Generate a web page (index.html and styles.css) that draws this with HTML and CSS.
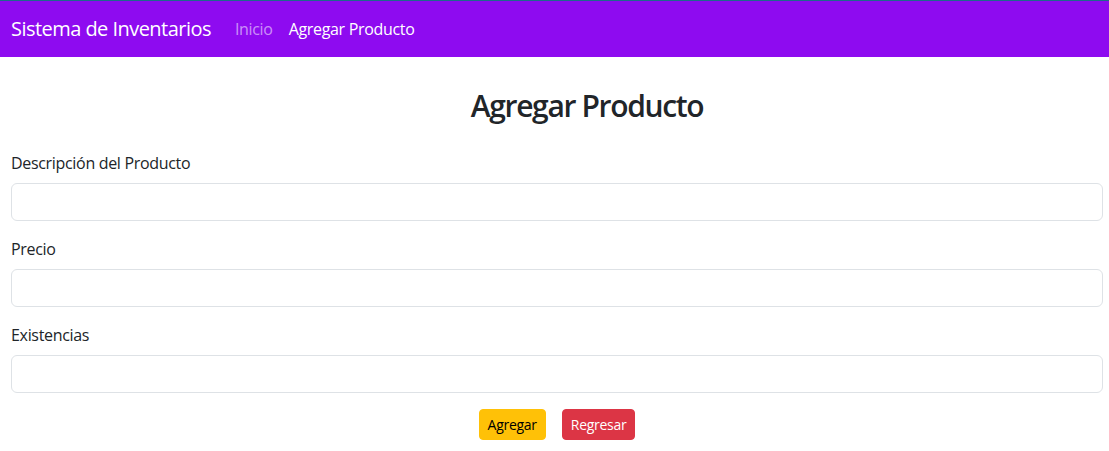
FILE: index.html
```html
<!DOCTYPE html>
<html lang="es">
<head>
<meta charset="utf-8">
<title>Agregar Producto</title>
<link rel="stylesheet" href="styles.css">
</head>
<body>
<nav class="navbar">
  <a class="brand" href="#">Sistema de Inventarios</a>
  <ul class="nav">
    <li><a class="nav-link muted" href="#">Inicio</a></li>
    <li><a class="nav-link active" href="#">Agregar Producto</a></li>
  </ul>
</nav>
<main class="content">
  <h2 class="title">Agregar Producto</h2>
  <form class="form">
    <div class="field">
      <label class="label" for="desc">Descripción del Producto</label>
      <input class="input" id="desc" type="text">
    </div>
    <div class="field">
      <label class="label" for="precio">Precio</label>
      <input class="input" id="precio" type="text">
    </div>
    <div class="field">
      <label class="label" for="exist">Existencias</label>
      <input class="input" id="exist" type="text">
    </div>
    <div class="actions">
      <button class="btn btn-warning" type="button">Agregar</button>
      <button class="btn btn-danger" type="button">Regresar</button>
    </div>
  </form>
</main>
</body>
</html>
```
FILE: styles.css
```css
* { box-sizing: border-box; }
html, body { margin: 0; padding: 0; }
body {
  font-family: "Open Sans", "Noto Sans", sans-serif;
  font-size: 16px;
  line-height: 1.5;
  letter-spacing: -0.02em;
  color: #212529;
  background: #fff;
}
.navbar {
  display: flex;
  align-items: center;
  height: 57px;
  padding: 0 11px;
  background: #8e0bf0;
  border-top: 1px solid #1d6a8c;
}
.brand {
  font-size: 20px;
  line-height: 30px;
  letter-spacing: -0.027em;
  color: #fff;
  text-decoration: none;
  margin-right: 16px;
}
.nav {
  display: flex;
  list-style: none;
  margin: 0;
  padding: 0;
}
.nav-link {
  display: block;
  padding: 8px;
  text-decoration: none;
  color: #fff;
}
.nav-link.muted { color: rgba(255, 255, 255, 0.55); }
.content {
  padding: 0 6px 0 11px;
}
.title {
  margin: 31px 0 27px;
  padding-left: 60px;
  text-align: center;
  font-size: 30px;
  font-weight: 600;
  line-height: 1.2;
  letter-spacing: -0.045em;
}
.field { margin-bottom: 16px; }
.label {
  display: block;
  margin-bottom: 8px;
}
.input {
  display: block;
  width: 100%;
  height: 38px;
  padding: 6px 12px;
  font: inherit;
  border: 1px solid #dee2e6;
  border-radius: 6px;
  background: #fff;
}
.actions {
  display: flex;
  justify-content: center;
  gap: 16px;
}
.btn {
  font: inherit;
  font-size: 14px;
  line-height: 21px;
  letter-spacing: -0.02em;
  padding: 4px 8px;
  border-radius: 4px;
  border: 1px solid transparent;
}
.btn-warning { background: #ffc107; border-color: #ffc107; color: #000; }
.btn-danger { background: #dc3545; border-color: #dc3545; color: #fff; }
```
